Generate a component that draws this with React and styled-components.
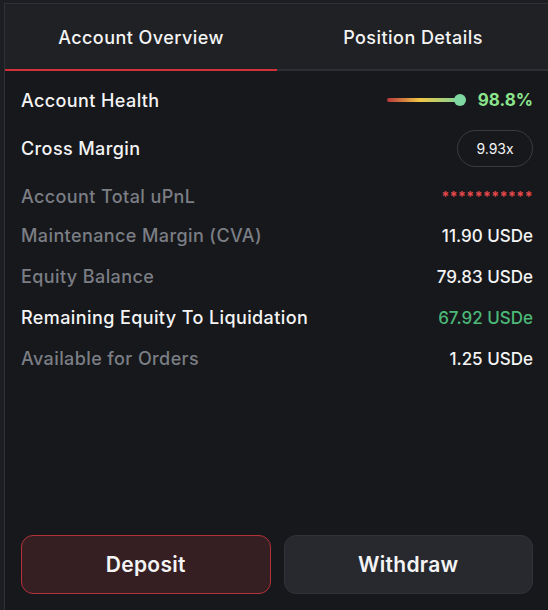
import React, { useState } from "react";
import styled, { createGlobalStyle } from "styled-components";

const GlobalStyle = createGlobalStyle`
  html, body {
    margin: 0;
    padding: 0;
    background: #1c1e22;
    font-family: Inter, "Noto Sans", sans-serif;
    -webkit-font-smoothing: antialiased;
  }
`;

const Page = styled.div`
  padding: 3px 0 0 4px;
  height: 610px;
  box-sizing: border-box;
  overflow: hidden;
`;

const Panel = styled.div`
  width: 545px;
  height: 607px;
  box-sizing: border-box;
  border-left: 1px solid #2e3137;
  border-top: 1px solid #2e3137;
  background: #17181b;
  display: flex;
  flex-direction: column;
`;

const Tabs = styled.div`
  display: grid;
  grid-template-columns: 1fr 1fr;
  background: #202124;
  border-bottom: 2px solid #2c2f34;
`;

const Tab = styled.button`
  height: 67px;
  margin-bottom: -2px;
  border: none;
  border-bottom: 2px solid ${(p) => (p.$active ? "#d1303a" : "transparent")};
  background: transparent;
  color: #f4f4f5;
  font-family: inherit;
  font-size: 18px;
  letter-spacing: 0.45px;
  font-weight: 500;
  cursor: pointer;
  padding: 2px 0 0;
`;

const Body = styled.div`
  flex: 1;
  display: flex;
  flex-direction: column;
  padding: 10px 16px 16px 16px;
`;

const Row = styled.div`
  display: flex;
  align-items: center;
  justify-content: space-between;
  height: ${(p) => p.$h || 41}px;
`;

const Label = styled.span`
  font-size: 18px;
  letter-spacing: 0.4px;
  font-weight: 500;
  color: ${(p) => (p.$muted ? "#7b7e85" : "#f4f4f5")};
`;

const Value = styled.span`
  font-size: 17px;
  font-weight: 500;
  color: ${(p) => p.$color || "#f4f4f5"};
`;

const Health = styled.div`
  display: flex;
  align-items: center;
  gap: 18px;
`;

const Bar = styled.div`
  position: relative;
  width: 73px;
  height: 4px;
  border-radius: 2px;
  background: linear-gradient(90deg, #b8363a 0%, #f1c644 45%, #7dd59c 100%);
`;

const Knob = styled.span`
  position: absolute;
  right: -6px;
  top: -4px;
  width: 12px;
  height: 12px;
  border-radius: 50%;
  background: #7fd8a1;
`;

const Percent = styled.span`
  font-size: 17px;
  font-weight: 700;
  color: #8ce58d;
`;

const Pill = styled.span`
  display: inline-flex;
  align-items: center;
  justify-content: center;
  width: 76px;
  height: 37px;
  box-sizing: border-box;
  border: 1px solid #3a3c41;
  border-radius: 19px;
  font-size: 14px;
  color: #f4f4f5;
`;

const Stars = styled.span`
  color: #e5484d;
  font-size: 14px;
  font-weight: 700;
  letter-spacing: 0.5px;
  align-self: flex-start;
  margin-top: 11px;
`;

const Actions = styled.div`
  margin-top: auto;
  display: grid;
  grid-template-columns: 1fr 1fr;
  gap: 13px;
`;

const ActionButton = styled.button`
  height: 59px;
  border-radius: 12px;
  border: 1px solid ${(p) => (p.$primary ? "#b4323a" : "#2f3237")};
  background: ${(p) => (p.$primary ? "#361f22" : "#27292e")};
  color: #f4f4f5;
  font-family: inherit;
  font-size: 21px;
  letter-spacing: 0.3px;
  font-weight: 600;
  cursor: pointer;
`;

const rows = [
  { label: "Maintenance Margin (CVA)", value: "11.90 USDe", muted: true },
  { label: "Equity Balance", value: "79.83 USDe", muted: true },
  { label: "Remaining Equity To Liquidation", value: "67.92 USDe", color: "#4cb878" },
  { label: "Available for Orders", value: "1.25 USDe", muted: true },
];

export default function App() {
  const [tab, setTab] = useState(0);
  return (
    <>
      <GlobalStyle />
      <Page>
        <Panel>
          <Tabs>
            <Tab $active={tab === 0} onClick={() => setTab(0)}>Account Overview</Tab>
            <Tab $active={tab === 1} onClick={() => setTab(1)}>Position Details</Tab>
          </Tabs>
          <Body>
            <Row $h={38}>
              <Label>Account Health</Label>
              <Health>
                <Bar><Knob /></Bar>
                <Percent>98.8%</Percent>
              </Health>
            </Row>
            <Row $h={58}>
              <Label>Cross Margin</Label>
              <Pill>9.93x</Pill>
            </Row>
            <Row $h={38}>
              <Label $muted>Account Total uPnL</Label>
              <Stars>***********</Stars>
            </Row>
            {rows.map((r) => (
              <Row key={r.label}>
                <Label $muted={r.muted}>{r.label}</Label>
                <Value $color={r.color}>{r.value}</Value>
              </Row>
            ))}
            <Actions>
              <ActionButton $primary>Deposit</ActionButton>
              <ActionButton>Withdraw</ActionButton>
            </Actions>
          </Body>
        </Panel>
      </Page>
    </>
  );
}
